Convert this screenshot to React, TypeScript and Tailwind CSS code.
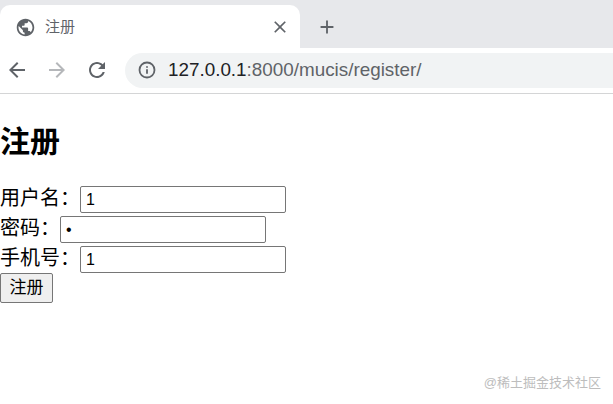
import { Info } from 'lucide-react'

const font = "font-['Liberation_Sans','Noto_Sans_CJK_SC',sans-serif]"

function MaterialIcon({ d, size, className }: { d: string; size: number; className: string }) {
  return (
    <svg width={size} height={size} viewBox="0 0 24 24" className={className} fill="currentColor">
      <path d={d} />
    </svg>
  )
}

const icons = {
  globe:
    'M12 2C6.48 2 2 6.48 2 12s4.48 10 10 10 10-4.48 10-10S17.52 2 12 2zm-1 17.93c-3.95-.49-7-3.85-7-7.93 0-.62.08-1.21.21-1.79L9 15v1c0 1.1.9 2 2 2v1.93zm6.9-2.54c-.26-.81-1-1.39-1.9-1.39h-1v-3c0-.55-.45-1-1-1H8v-2h2c.55 0 1-.45 1-1V7h2c1.1 0 2-.9 2-2v-.41c2.93 1.19 5 4.06 5 7.41 0 2.08-.8 3.97-2.1 5.39z',
  close:
    'M19 6.41 17.59 5 12 10.59 6.41 5 5 6.41 10.59 12 5 17.59 6.41 19 12 13.41 17.59 19 19 17.59 13.41 12z',
  plus: 'M19 13h-6v6h-2v-6H5v-2h6V5h2v6h6v2z',
  back: 'M20 11H7.83l5.59-5.59L12 4l-8 8 8 8 1.41-1.41L7.83 13H20v-2z',
  forward: 'M4 13h12.17l-5.59 5.59L12 20l8-8-8-8-1.41 1.41L16.17 11H4v2z',
  reload:
    'M17.65 6.35C16.2 4.9 14.21 4 12 4c-4.42 0-7.99 3.58-7.99 8s3.57 8 7.99 8c3.73 0 6.84-2.55 7.73-6h-2.08c-.82 2.33-3.04 4-5.65 4-3.31 0-6-2.69-6-6s2.69-6 6-6c1.66 0 3.14.69 4.22 1.78L13 11h7V4l-2.35 2.35z',
}

function Field({ label, type, value, last }: { label: string; type: string; value: string; last?: boolean }) {
  return (
    <div className={last ? 'flex items-start' : 'mb-[3px] flex items-start'}>
      <label className="text-[20px] leading-[24px] text-black">{label}</label>
      <input
        type={type}
        defaultValue={value}
        className="h-[27px] w-[206px] rounded-[2px] border border-[#767676] bg-white px-[5px] text-[16px] text-black"
      />
    </div>
  )
}

export default function App() {
  return (
    <div className={`relative h-[404px] w-[613px] overflow-hidden bg-white ${font}`}>
      <div className="flex h-[48px] items-end bg-[#e7e8eb]">
        <div className="flex h-[43px] w-[300px] items-center rounded-t-[10px] bg-white pl-[15px] pr-[10px] pt-[1px]">
          <MaterialIcon d={icons.globe} size={21} className="text-[#5f6368]" />
          <span className="ml-[9px] text-[15px] text-[#5f6368]">注册</span>
          <MaterialIcon d={icons.close} size={20} className="mb-[1px] ml-auto text-[#5f6368]" />
        </div>
        <div className="flex h-[43px] items-center pl-[16px]">
          <MaterialIcon d={icons.plus} size={22} className="text-[#5f6368]" />
        </div>
      </div>

      <div className="flex h-[46px] items-center border-b border-[#d4d5d6] bg-white pb-[1px]">
        <div className="flex w-[125px] items-center pl-[5px]">
          <MaterialIcon d={icons.back} size={24} className="text-[#5f6368]" />
          <MaterialIcon d={icons.forward} size={24} className="ml-[16px] text-[#b5b7ba]" />
          <MaterialIcon d={icons.reload} size={24} className="ml-[16px] text-[#5f6368]" />
        </div>
        <div className="flex h-[35px] flex-1 items-center rounded-l-[18px] bg-[#f1f3f4] pl-[13px]">
          <Info size={18} className="text-[#5f6368]" strokeWidth={2.4} />
          <span className="ml-[12px] text-[18.85px] text-[#5f6368]">
            <span className="text-[#202124]">127.0.0.1</span>:8000/mucis/register/
          </span>
        </div>
      </div>

      <main>
        <h1 className="mb-[25px] mt-[29px] text-[30px] font-bold leading-[38px] text-black">注册</h1>
        <form className="flex flex-col items-start">
          <Field label="用户名：" type="text" value="1" />
          <Field label="密码：" type="password" value="1" />
          <Field label="手机号：" type="text" value="1" last />
          <button
            type="button"
            className="h-[30px] w-[53px] rounded-[2px] border border-[#767676] bg-[#efefef] text-[17px] text-black"
          >
            注册
          </button>
        </form>
      </main>

      <span className="absolute bottom-[12px] right-[12px] text-[13px] text-[#bdbdbd]">@稀土掘金技术社区</span>
    </div>
  )
}
